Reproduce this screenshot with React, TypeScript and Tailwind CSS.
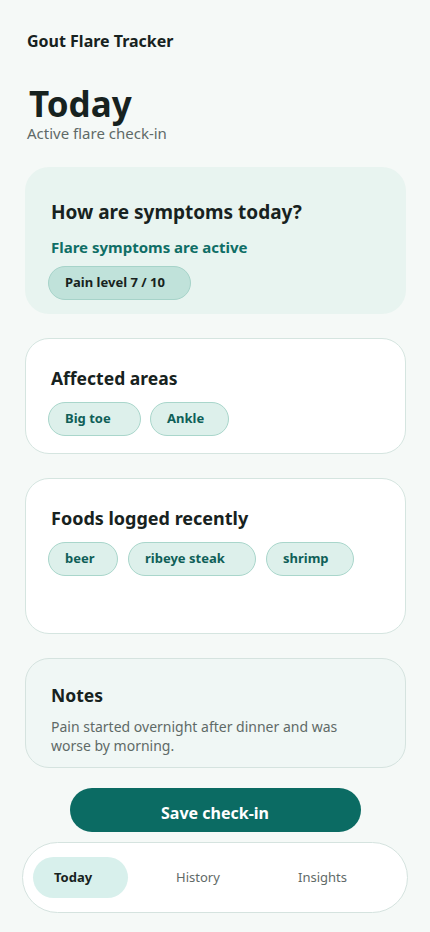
import React from "react";

type Chip = { label: string; width: string };

const areas: Chip[] = [
  { label: "Big toe", width: "w-[93px]" },
  { label: "Ankle", width: "w-[79px]" },
];

const foods: Chip[] = [
  { label: "beer", width: "w-[70px]" },
  { label: "ribeye steak", width: "w-[128px]" },
  { label: "shrimp", width: "w-[88px]" },
];

function Pill({ label, width }: Chip) {
  return (
    <span className={`flex h-[34px] ${width} items-center rounded-full border border-[#a9d6cb] bg-[#ddf0eb] pl-[16px] text-[13px] font-bold text-[#0f5f58]`}>
      {label}
    </span>
  );
}

export default function App() {
  return (
    <div className="min-h-[932px] w-[430px] bg-[#f5f9f7] text-[#172220]" style={{ fontFamily: '"Noto Sans", "Open Sans", sans-serif' }}>
      <div className="px-[27px] pt-[30px]">
        <div className="text-[16px] font-bold leading-[22px]">Gout Flare Tracker</div>
        <h1 className="mt-[35px] pl-[2px] text-[35px] font-bold leading-[34px]">Today</h1>
        <div className="mt-[2px] text-[15px] leading-[20px] text-[#5f6a67]">Active flare check-in</div>
      </div>

      <div className="flex flex-col gap-[24px] pl-[25px] pr-[24px] pt-[24px]">
        <section className="h-[147px] rounded-[24px] bg-[#e8f4f0] px-[23px] pt-[32px]">
          <h2 className="pl-[3px] text-[19px] font-bold leading-[26px]">How are symptoms today?</h2>
          <p className="mt-[12px] pl-[3px] text-[15px] font-bold leading-[20px] text-[#0f6e66]">Flare symptoms are active</p>
          <span className="mt-[9px] flex h-[34px] w-[143px] items-center rounded-full border border-[#a6d3c9] bg-[#c0e2da] pl-[16px] text-[13px] font-bold text-[#172220]">
            Pain level 7 / 10
          </span>
        </section>

        <section className="h-[116px] rounded-[24px] border border-[#d5e5e0] bg-white px-[22px] pt-[26px]">
          <h2 className="pl-[3px] text-[17.5px] font-bold leading-[26px]">Affected areas</h2>
          <div className="mt-[11px] flex gap-[9px]">
            {areas.map((a) => (
              <Pill key={a.label} {...a} />
            ))}
          </div>
        </section>

        <section className="h-[156px] rounded-[24px] border border-[#d5e5e0] bg-white px-[22px] pt-[26px]">
          <h2 className="pl-[3px] text-[18px] font-bold leading-[26px]">Foods logged recently</h2>
          <div className="mt-[11px] flex gap-[10px]">
            {foods.map((f) => (
              <Pill key={f.label} {...f} />
            ))}
          </div>
        </section>

        <section className="h-[110px] rounded-[24px] border border-[#d5e3df] bg-[#f0f7f5] px-[25px] pt-[23px]">
          <h2 className="text-[17.5px] font-bold leading-[26px]">Notes</h2>
          <p className="mt-[9px] text-[14px] leading-[19px] text-[#5f6a67]">
            Pain started overnight after dinner and was worse by morning.
          </p>
        </section>
      </div>

      <div className="mt-[20px] flex justify-center">
        <button className="h-[44px] w-[291px] rounded-full bg-[#0b6b63] pt-[6px] text-[16px] font-bold text-white">
          Save check-in
        </button>
      </div>

      <nav className="mx-[22px] mt-[10px] flex h-[71px] items-center gap-[27px] rounded-full border border-[#d5e3df] bg-white px-[10px]">
        <span className="flex h-[41px] w-[95px] items-center rounded-full bg-[#d8f0ec] pl-[21px] text-[13px] font-bold text-[#172220]">Today</span>
        <span className="flex h-[41px] w-[95px] items-center pl-[21px] text-[13px] text-[#5f6a67]">History</span>
        <span className="flex h-[41px] w-[95px] items-center pl-[21px] text-[13px] text-[#5f6a67]">Insights</span>
      </nav>
    </div>
  );
}
